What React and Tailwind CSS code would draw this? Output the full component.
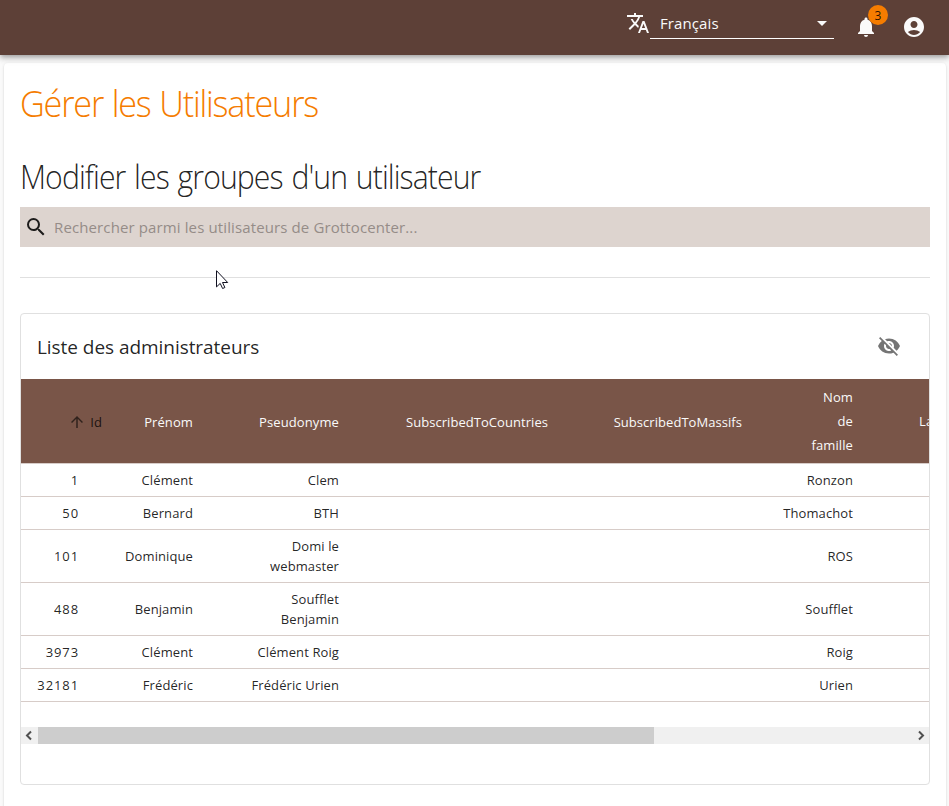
import {
  MdTranslate,
  MdArrowDropDown,
  MdNotifications,
  MdAccountCircle,
  MdSearch,
  MdVisibilityOff,
  MdArrowUpward,
} from "react-icons/md";

const rows = [
  ["1", "Clément", "Clem", "Ronzon"],
  ["50", "Bernard", "BTH", "Thomachot"],
  ["101", "Dominique", "Domi le webmaster", "ROS"],
  ["488", "Benjamin", "Soufflet Benjamin", "Soufflet"],
  ["3973", "Clément", "Clément Roig", "Roig"],
  ["32181", "Frédéric", "Frédéric Urien", "Urien"],
];

function TopBar() {
  return (
    <header className="relative z-10 flex h-[55px] justify-end bg-[#5d4037] pr-[23px] text-[#fafafa] shadow-[0_2px_4px_-1px_rgba(0,0,0,0.2),0_4px_5px_0_rgba(0,0,0,0.14),0_1px_10px_0_rgba(0,0,0,0.12)]">
      <MdTranslate className="mt-[11px] size-6" />
      <div className="mt-[7px] flex h-8 w-[184px] items-center justify-between border-b border-white pl-[10px]">
        <span className="pt-[2px] text-[15px] tracking-[0.1px]">Français</span>
        <MdArrowDropDown className="size-6" />
      </div>
      <div className="relative mt-[15px] ml-5 size-6">
        <MdNotifications className="size-6" />
        <span className="absolute -top-[10px] left-[14px] flex size-5 items-center justify-center rounded-full bg-[#f57c00] pt-px text-[12px] text-black/85">
          3
        </span>
      </div>
      <MdAccountCircle className="mt-[15px] ml-6 size-6" />
    </header>
  );
}

function AdminTable() {
  const head = "pt-[2px] pr-6 pl-4 font-normal leading-6";
  const cell = "py-[6px] pr-6 pl-4 leading-5";
  return (
    <div className="w-full overflow-hidden">
      <table className="w-[1392px] table-fixed border-collapse text-right text-[13px] tracking-[0.1px]">
        <colgroup>
          <col className="w-[81px]" />
          <col className="w-[115px]" />
          <col className="w-[146px]" />
          <col className="w-[209px]" />
          <col className="w-[194px]" />
          <col className="w-[111px]" />
          <col />
        </colgroup>
        <thead>
          <tr className="h-[84px] border-b border-[#d7ccc8] bg-[#795548] text-[#fafafa]">
            <th className="pt-[2px] font-normal text-black/80">
              <span className="flex items-center justify-end gap-1">
                <MdArrowUpward className="size-[18px] text-black/60" />
                <span className="pt-px">Id</span>
              </span>
            </th>
            <th className={head}>Prénom</th>
            <th className={head}>Pseudonyme</th>
            <th className="pt-[2px] pr-6 leading-6 font-normal tracking-[0.05px]">SubscribedToCountries</th>
            <th className="pt-[2px] pr-6 leading-6 font-normal tracking-[0.05px]">SubscribedToMassifs</th>
            <th className="pr-6 pl-4 leading-6 font-normal">
              Nom
              <br />
              de
              <br />
              famille
            </th>
            <th className="pt-[2px] pl-[42px] text-left font-normal">Langue</th>
          </tr>
        </thead>
        <tbody className="text-black/87">
          {rows.map(([id, first, nick, last]) => (
            <tr key={id} className="border-b border-[#d7ccc8]">
              <td className="py-[6px] pr-[23px] leading-5 tracking-[0.9px]">{id}</td>
              <td className={cell}>{first}</td>
              <td className={cell}>{nick}</td>
              <td />
              <td />
              <td className={cell}>{last}</td>
              <td />
            </tr>
          ))}
        </tbody>
      </table>
    </div>
  );
}

function ScrollBar() {
  return (
    <div className="mt-[25px] flex h-[17px] bg-[#f0f0f0] text-[#505050]">
      <svg className="size-[17px]" viewBox="0 0 17 17" fill="none" stroke="currentColor" strokeWidth="2">
        <path d="M10 4.5 6 8.5l4 4" />
      </svg>
      <div className="w-[616px] bg-[#cdcdcd]" />
      <svg className="ml-auto size-[17px]" viewBox="0 0 17 17" fill="none" stroke="currentColor" strokeWidth="2">
        <path d="m7 4.5 4 4-4 4" />
      </svg>
    </div>
  );
}

export default function App() {
  return (
    <div className="relative h-[806px] overflow-hidden bg-[#fafafa] font-['Open_Sans','Noto_Sans',sans-serif] text-black/87">
      <TopBar />
      <main className="mx-1 mt-2 mr-[3px] h-[800px] rounded bg-white px-4 shadow-[0_2px_1px_-1px_rgba(0,0,0,0.2),0_1px_1px_0_rgba(0,0,0,0.14),0_1px_3px_0_rgba(0,0,0,0.12)]">
        <h1 className="origin-left scale-x-[0.926] pt-[16px] text-[37px] leading-[48px] font-light tracking-[-1.3px] whitespace-nowrap text-[#f57c00] [word-spacing:1px]">
          Gérer les Utilisateurs
        </h1>
        <h2 className="mt-[30px] origin-left scale-x-[0.914] text-[33px] leading-[40px] font-light tracking-[-1px] whitespace-nowrap [word-spacing:2px]">
          Modifier les groupes d'un utilisateur
        </h2>
        <div className="mt-[10px] flex h-10 items-center bg-[#ddd4cf] pl-1">
          <MdSearch className="size-6" />
          <span className="ml-[6px] text-[15px] tracking-[0.12px] text-[#958c88]">
            Rechercher parmi les utilisateurs de Grottocenter...
          </span>
        </div>
        <hr className="mt-[30px] border-[#e0e0e0]" />
        <section className="mt-[35px] h-[472px] rounded border border-[#e0e0e0]">
          <div className="flex h-[65px] items-center justify-between pr-[28px] pl-4">
            <h3 className="pt-[2px] text-[19px] tracking-[-0.05px]">Liste des administrateurs</h3>
            <MdVisibilityOff className="mb-[2px] size-6 text-black/54" />
          </div>
          <AdminTable />
          <ScrollBar />
        </section>
      </main>
      <svg className="absolute top-[270px] left-[216px] z-20 h-[20px] w-[13px]" viewBox="0 0 13 20">
        <path d="M.5.7v16.2l3.7-3.5 2.4 5.1 2.3-1-2.4-5h5.2z" fill="#fff" stroke="#101020" strokeWidth="1" />
      </svg>
    </div>
  );
}
